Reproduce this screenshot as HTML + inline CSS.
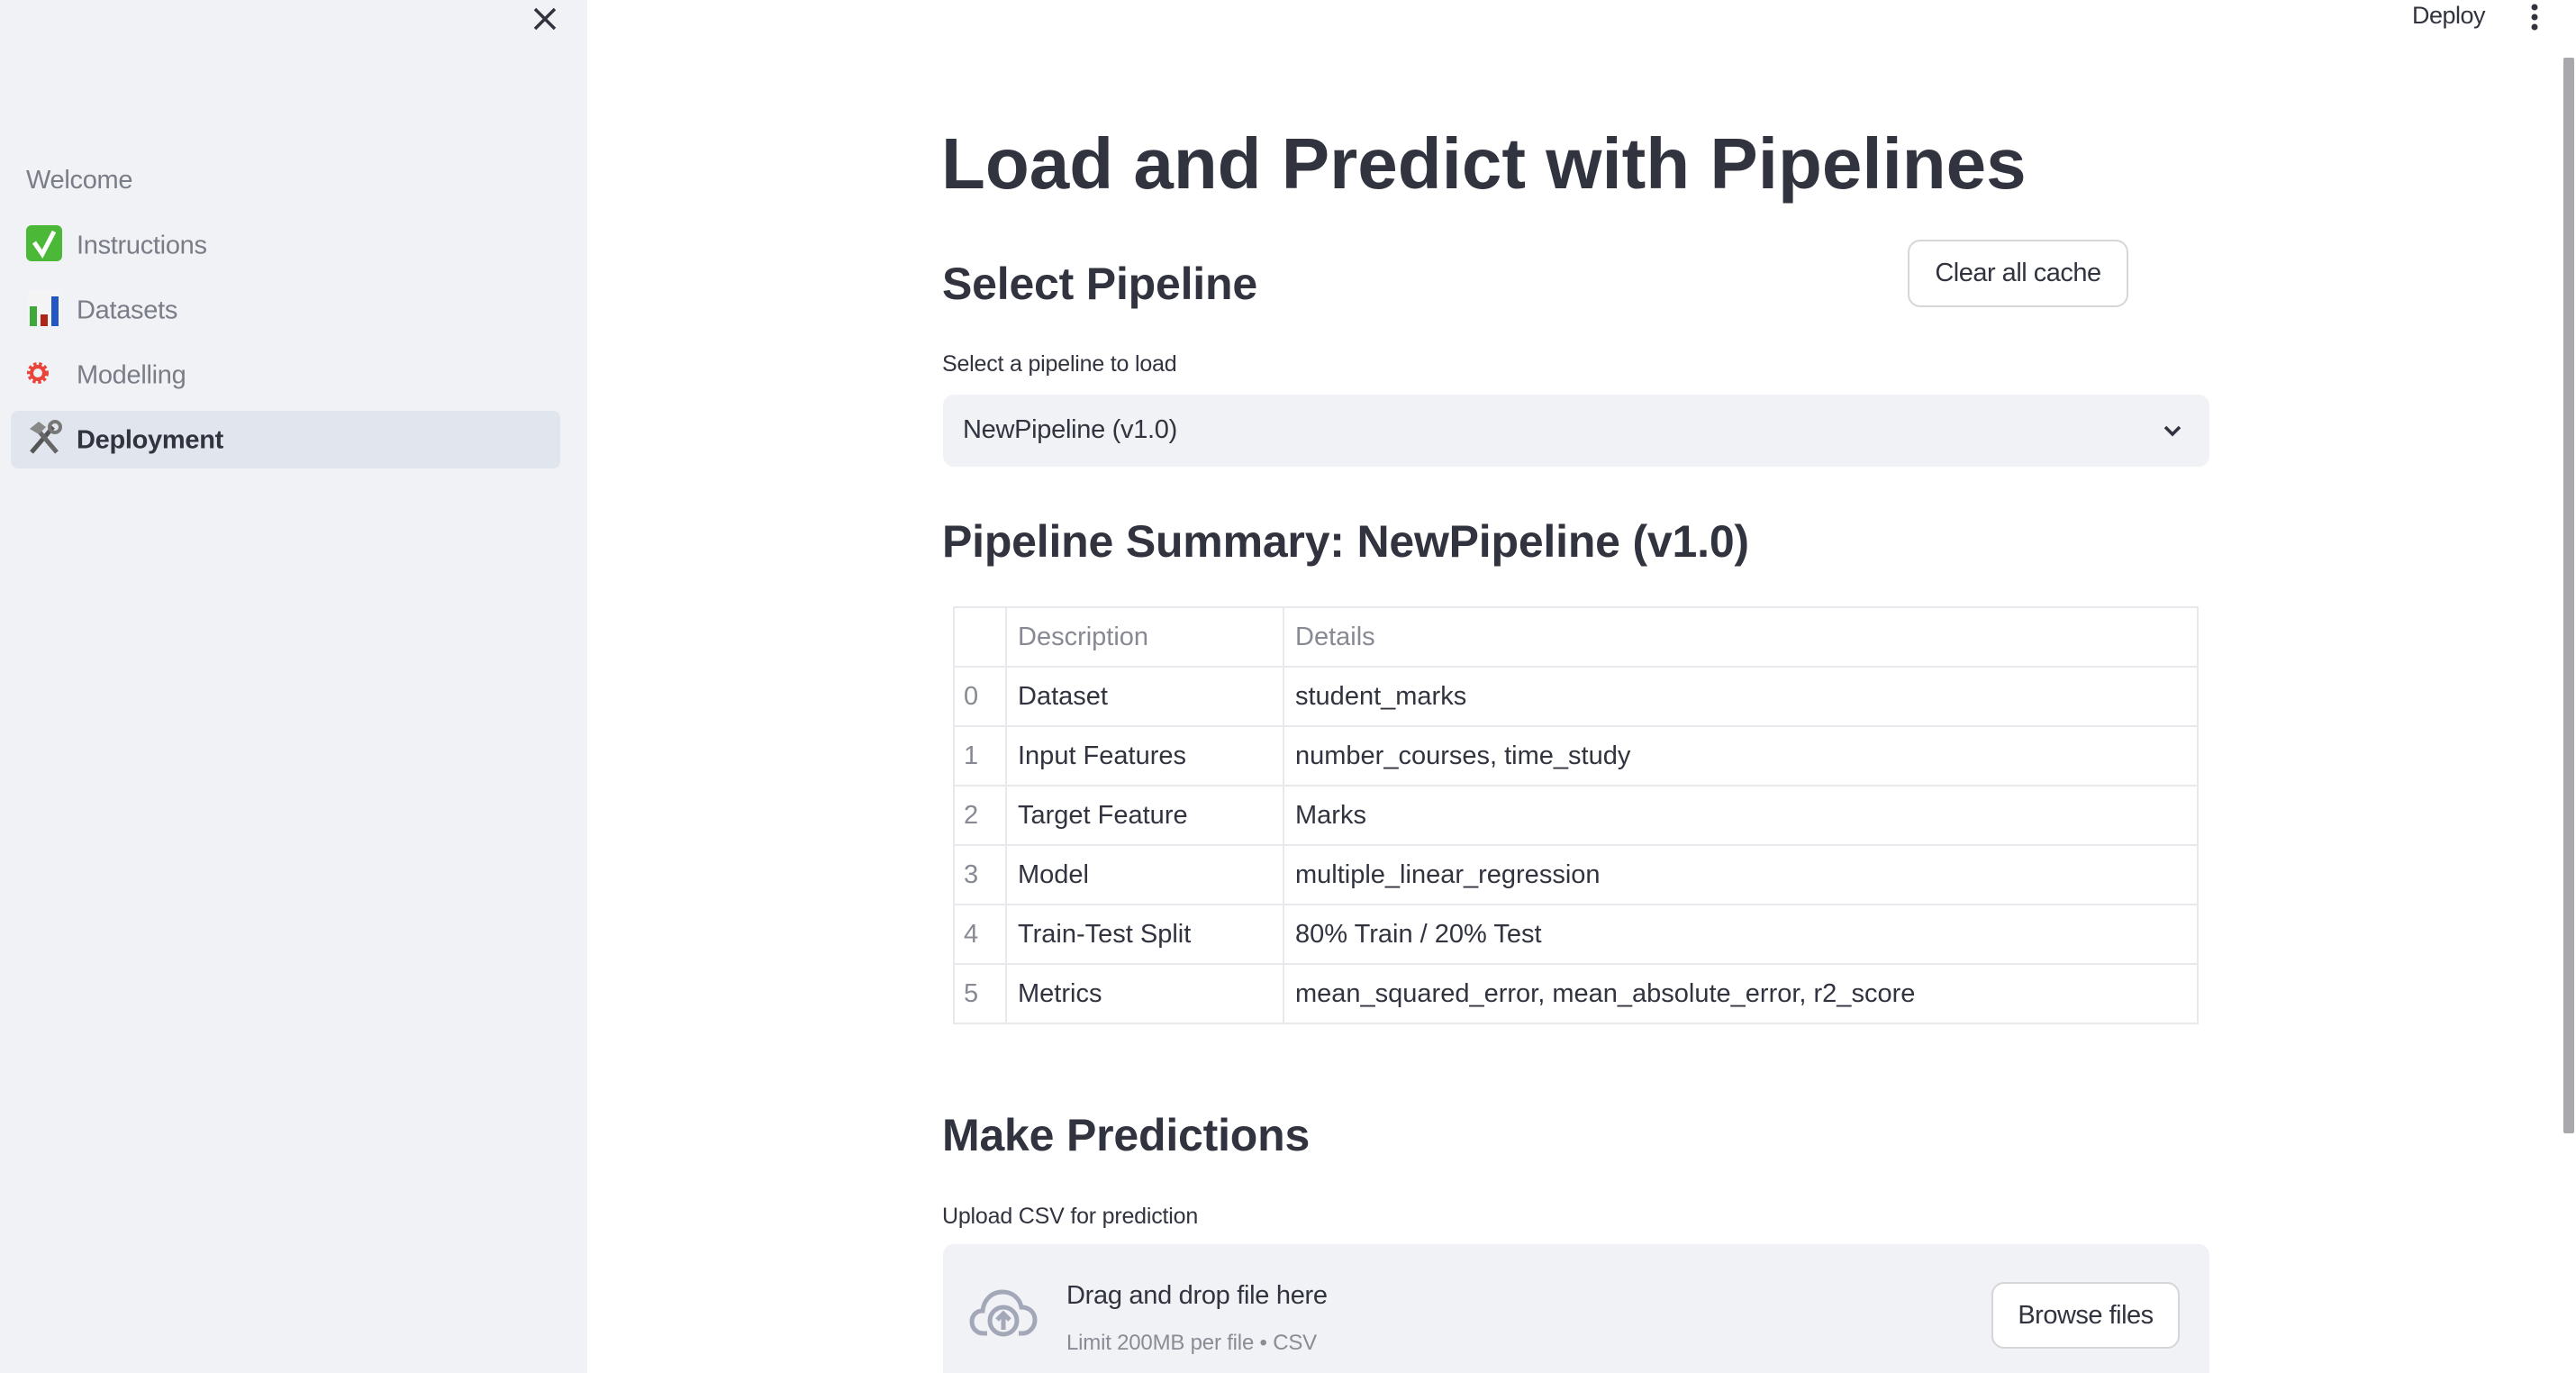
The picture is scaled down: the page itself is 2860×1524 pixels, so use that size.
<!DOCTYPE html>
<html style="overflow:hidden;height:1524px"><head><meta charset="utf-8"><style>
*{margin:0;padding:0;box-sizing:border-box}
body{width:2860px;height:1524px;overflow:hidden;background:#fff;font-family:"Liberation Sans","DejaVu Sans",sans-serif;color:#31333f;position:relative}
.a{position:absolute;white-space:nowrap}
#side{position:absolute;left:0;top:0;width:652px;height:1524px;background:#f0f2f6}
.nav{position:absolute;left:29px;font-size:29px;color:#7a7c87;letter-spacing:-0.3px;line-height:34px}
.ic{display:inline-block;width:40px;margin-right:16px;text-align:center;vertical-align:middle}
.h2{font-size:50px;font-weight:bold;letter-spacing:-0.2px}
table{position:absolute;left:1058px;top:673px;width:1383px;border-collapse:collapse;font-size:29px;letter-spacing:0}
td{border:2px solid #e8e9ec;height:66px;padding:0 12px;color:#31333f}
td.i{color:#888a93;width:58px;padding:0 10px}
tr.h td{color:#888a93}
.btn{position:absolute;border:2px solid #d6d6d9;border-radius:14px;background:#fff;font-size:29px;display:flex;align-items:center;justify-content:center;letter-spacing:-0.5px}
</style></head><body>
<div id="side">
 <svg class="a" style="left:588px;top:4px" width="34" height="34" viewBox="0 0 34 34"><path d="M6 6L28 28M28 6L6 28" stroke="#31333f" stroke-width="3.5"/></svg>
 <div class="nav" style="top:183px">Welcome</div>
 <div class="nav" style="top:250px"><span class="ic"><svg width="40" height="40" viewBox="0 0 40 40"><rect x="0" y="0" width="40" height="40" rx="6" fill="#4cb838"/><path d="M9 19l9 13L31 7" fill="none" stroke="#fff" stroke-width="5"/></svg></span>Instructions</div>
 <div class="nav" style="top:322px"><span class="ic"><svg width="36" height="40" viewBox="0 0 36 40"><rect width="36" height="40" fill="#f4f4f4"/><rect x="2" y="18" width="8" height="22" fill="#3ea83a"/><rect x="14" y="27" width="8" height="13" fill="#b02418"/><rect x="26" y="7" width="8" height="33" fill="#2456c4"/></svg></span>Datasets</div>
 <div class="nav" style="top:399px"><span class="ic" style="text-align:left"><svg width="26" height="30" viewBox="0 0 26 30"><circle cx="13" cy="15" r="9" fill="none" stroke="#e8443a" stroke-width="6" stroke-dasharray="3 2.4"/><circle cx="13" cy="15" r="7" fill="none" stroke="#e8443a" stroke-width="4"/></svg></span>Modelling</div>
 <div class="a" style="left:12px;top:456px;width:610px;height:64px;background:#e1e5ed;border-radius:8px"></div>
 <div class="nav" style="top:466px;color:#31333f;font-weight:bold"><span class="ic"><svg width="40" height="40" viewBox="0 0 40 40"><path d="M6 36L30 8" stroke="#555" stroke-width="5"/><path d="M34 36L12 10" stroke="#666" stroke-width="5"/><path d="M4 10l10-8 8 6-8 8z" fill="#888"/><circle cx="32" cy="8" r="6" fill="none" stroke="#777" stroke-width="4"/></svg></span>Deployment</div>
</div>
<div class="a" style="left:2678px;top:2px;font-size:27px;letter-spacing:-0.5px">Deploy</div>
<svg class="a" style="left:2806px;top:2px" width="16" height="44" viewBox="0 0 16 44"><circle cx="8" cy="6" r="3.5" fill="#31333f"/><circle cx="8" cy="17" r="3.5" fill="#31333f"/><circle cx="8" cy="28" r="3.5" fill="#31333f"/></svg>
<div class="a" style="left:2846px;top:64px;width:12px;height:1194px;background:#a9a9ad;border-radius:2px"></div>

<div class="a" style="left:1045px;top:136px;font-size:80px;font-weight:bold;letter-spacing:0px">Load and Predict with Pipelines</div>
<div class="a h2" style="left:1046px;top:286px">Select Pipeline</div>
<div class="btn" style="left:2118px;top:266px;width:245px;height:75px">Clear all cache</div>
<div class="a" style="left:1046px;top:390px;font-size:25px;letter-spacing:-0.2px">Select a pipeline to load</div>
<div class="a" style="left:1047px;top:438px;width:1406px;height:80px;background:#f0f2f6;border-radius:12px"></div>
<div class="a" style="left:1069px;top:461px;font-size:29px;letter-spacing:-0.3px">NewPipeline (v1.0)</div>
<svg class="a" style="left:2400px;top:468px" width="24" height="20" viewBox="0 0 24 20"><path d="M4 6l8 8 8-8" fill="none" stroke="#31333f" stroke-width="3.5"/></svg>
<div class="a h2" style="left:1046px;top:572px">Pipeline Summary: NewPipeline (v1.0)</div>
<table>
<tr class="h"><td class="i"></td><td style="width:308px">Description</td><td>Details</td></tr>
<tr><td class="i">0</td><td>Dataset</td><td>student_marks</td></tr>
<tr><td class="i">1</td><td>Input Features</td><td>number_courses, time_study</td></tr>
<tr><td class="i">2</td><td>Target Feature</td><td>Marks</td></tr>
<tr><td class="i">3</td><td>Model</td><td>multiple_linear_regression</td></tr>
<tr><td class="i">4</td><td>Train-Test Split</td><td>80% Train / 20% Test</td></tr>
<tr><td class="i">5</td><td>Metrics</td><td>mean_squared_error, mean_absolute_error, r2_score</td></tr>
</table>
<div class="a h2" style="left:1046px;top:1231px">Make Predictions</div>
<div class="a" style="left:1046px;top:1336px;font-size:25px;letter-spacing:-0.2px">Upload CSV for prediction</div>
<div class="a" style="left:1047px;top:1381px;width:1406px;height:143px;background:#f0f2f6;border-radius:12px 12px 0 0"></div>
<svg class="a" style="left:1076px;top:1430px" width="76" height="56" viewBox="0 0 76 56"><path d="M20 50H16C8 50 3 44 3 37c0-7 5-12 12-12 1-12 10-21 22-21 11 0 19 7 21 17 9 0 15 6 15 14s-6 15-14 15h-4" fill="none" stroke="#a3a8b8" stroke-width="5"/><circle cx="38" cy="36" r="15" fill="none" stroke="#a3a8b8" stroke-width="5"/><path d="M38 46V28M31 35l7-7 7 7" fill="none" stroke="#a3a8b8" stroke-width="5"/></svg>
<div class="a" style="left:1184px;top:1422px;font-size:29px;letter-spacing:-0.3px">Drag and drop file here</div>
<div class="a" style="left:1184px;top:1477px;font-size:24px;color:#8a8c95;letter-spacing:-0.2px">Limit 200MB per file • CSV</div>
<div class="btn" style="left:2211px;top:1423px;width:209px;height:74px">Browse files</div>
</body></html>
